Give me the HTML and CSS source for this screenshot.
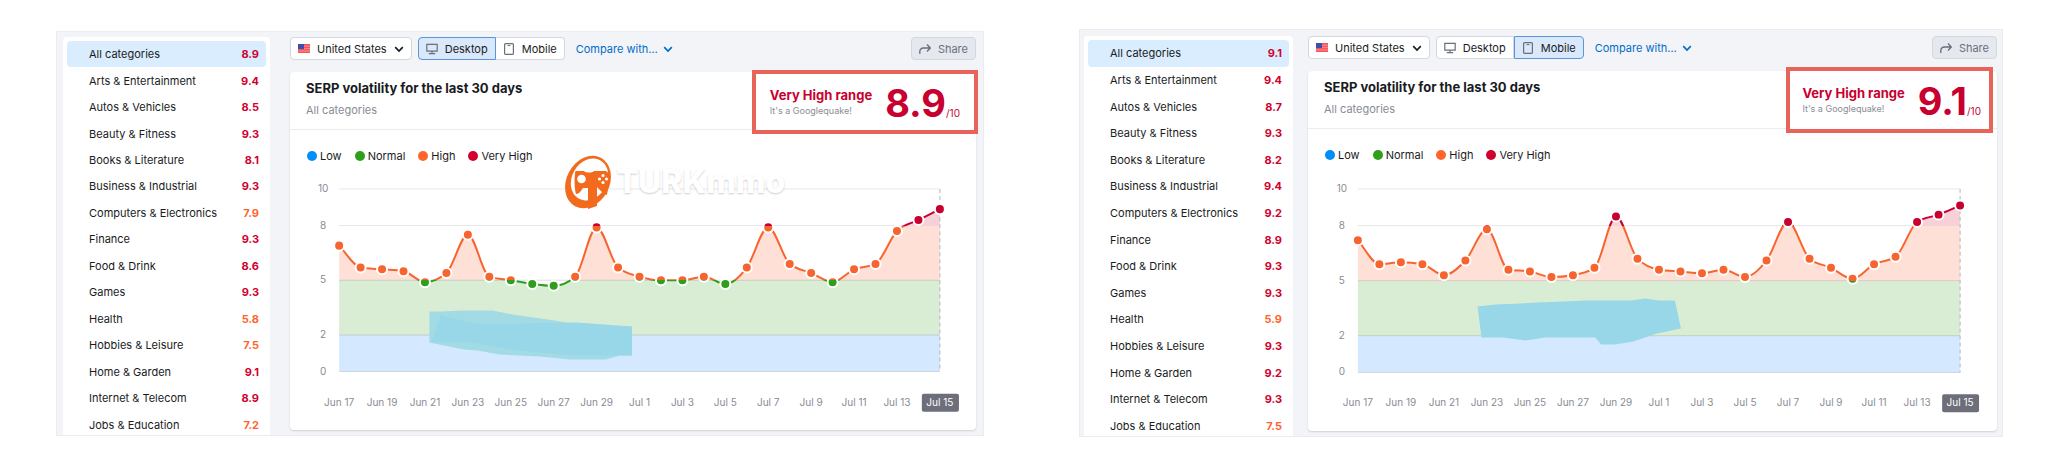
FILE: index.html
```
<!DOCTYPE html>
<html lang="en">
<head>
    <meta charset="UTF-8">
    <meta name="viewport" content="width=device-width, initial-scale=1.0">
    <title>SERP volatility: desktop and mobile</title>
    <link rel="stylesheet" href="styles.css">
</head>
<body>
    <svg class="sprite" aria-hidden="true">
        <symbol id="flag-us" viewBox="0 0 12 9">
            <rect width="12" height="9" fill="#f4555a"/>
            <path d="M6 2.2h6M6 4.6h6M0 7h12" stroke="#f9a9a6" stroke-width="0.7"/>
            <rect width="6" height="5" fill="#3f4fa8"/>
        </symbol>
        <symbol id="chevron" viewBox="0 0 10 10">
            <path d="M1.2 3.2 5 7l3.8-3.8" fill="none" stroke="currentColor" stroke-width="1.7"/>
        </symbol>
        <symbol id="desktop" viewBox="0 0 12 12">
            <path d="M.8 1.3h10.400v6.900H.8zM6 8.200v2.500M2.800 10.700h6.400" fill="none" stroke="currentColor" stroke-width="1.2"/>
        </symbol>
        <symbol id="mobile" viewBox="0 0 12 12">
            <rect x="1.6" y=".6" width="8.8" height="10.8" rx="1" fill="none" stroke="currentColor" stroke-width="1.2"/>
            <path d="M4.5 2.6h3" stroke="currentColor" stroke-width="1"/>
        </symbol>
        <symbol id="share" viewBox="0 0 12 12">
            <path d="M.8 11V8.500a3.500 3.500 0 0 1 3.500-3.500h6.500M8 1.500 11.300 5 8 8.500" fill="none" stroke="currentColor" stroke-width="1.3"/>
        </symbol>
    </svg>

    <div class="page">
        <section class="panel panel-desktop">
            <nav class="categories">
                <a href="#" class="active">All categories <b>8.9</b></a>
                <a href="#">Arts &amp; Entertainment <b>9.4</b></a>
                <a href="#">Autos &amp; Vehicles <b>8.5</b></a>
                <a href="#">Beauty &amp; Fitness <b>9.3</b></a>
                <a href="#">Books &amp; Literature <b>8.1</b></a>
                <a href="#">Business &amp; Industrial <b>9.3</b></a>
                <a href="#">Computers &amp; Electronics <b class="high">7.9</b></a>
                <a href="#">Finance <b>9.3</b></a>
                <a href="#">Food &amp; Drink <b>8.6</b></a>
                <a href="#">Games <b>9.3</b></a>
                <a href="#">Health <b class="high">5.8</b></a>
                <a href="#">Hobbies &amp; Leisure <b class="high">7.5</b></a>
                <a href="#">Home &amp; Garden <b>9.1</b></a>
                <a href="#">Internet &amp; Telecom <b>8.9</b></a>
                <a href="#">Jobs &amp; Education <b class="high">7.2</b></a>
            </nav>
            <div class="main">
                <div class="toolbar">
                    <button type="button" class="btn country"><svg class="flag"><use href="#flag-us"/></svg>United States<svg class="chev"><use href="#chevron"/></svg></button>
                    <div class="devices">
                        <button type="button" class="btn selected"><svg class="icon"><use href="#desktop"/></svg>Desktop</button>
                        <button type="button" class="btn"><svg class="icon"><use href="#mobile"/></svg>Mobile</button>
                    </div>
                    <button type="button" class="compare">Compare with… <svg class="chev"><use href="#chevron"/></svg></button>
                    <button type="button" class="btn share"><svg class="icon"><use href="#share"/></svg>Share</button>
                </div>
                <div class="card">
                    <div class="card-header">
                        <h2>SERP volatility for the last 30 days</h2>
                        <p>All categories</p>
                    </div>
                    <div class="score">
                        <div class="score-text">
                            <strong>Very High range</strong>
                            <span>It's a Googlequake!</span>
                        </div>
                        <div class="score-value">8.9<small>/10</small></div>
                    </div>
                    <ul class="legend">
                        <li class="low">Low</li>
                        <li class="normal">Normal</li>
                        <li class="high">High</li>
                        <li class="very-high">Very High</li>
                    </ul>
                    <svg class="chart" id="chart-desktop" viewBox="0 0 684 257"></svg>
                    <div class="watermark">
                        <svg viewBox="0 0 48 54">
                            <ellipse cx="24" cy="27" rx="21.5" ry="27.5" fill="#f26a1b" transform="rotate(28 24 27)"/>
                            <ellipse cx="25.5" cy="24.5" rx="17.5" ry="22" fill="#fff" transform="rotate(30 25.5 24.5)"/>
                            <path d="M11.500 16H20c2 2 8 2 10 0h12l4 3-3 21c-4-1-7-5-10-8v19l-9 3V33h-5c-2 3-4 6-7 6-1.500-5-2-17-.500-23z" fill="#f26a1b"/>
                            <circle cx="17.500" cy="24" r="4.300" fill="#fff"/>
                            <g fill="#fff"><circle cx="39" cy="20.500" r="1.600"/><circle cx="39" cy="27.500" r="1.600"/><circle cx="35.500" cy="24" r="1.600"/><circle cx="42.500" cy="24" r="1.600"/></g>
                        </svg>
                        <span>TURKmmo</span>
                    </div>
                </div>
            </div>
        </section>

        <section class="panel panel-mobile">
            <nav class="categories">
                <a href="#" class="active">All categories <b>9.1</b></a>
                <a href="#">Arts &amp; Entertainment <b>9.4</b></a>
                <a href="#">Autos &amp; Vehicles <b>8.7</b></a>
                <a href="#">Beauty &amp; Fitness <b>9.3</b></a>
                <a href="#">Books &amp; Literature <b>8.2</b></a>
                <a href="#">Business &amp; Industrial <b>9.4</b></a>
                <a href="#">Computers &amp; Electronics <b>9.2</b></a>
                <a href="#">Finance <b>8.9</b></a>
                <a href="#">Food &amp; Drink <b>9.3</b></a>
                <a href="#">Games <b>9.3</b></a>
                <a href="#">Health <b class="high">5.9</b></a>
                <a href="#">Hobbies &amp; Leisure <b>9.3</b></a>
                <a href="#">Home &amp; Garden <b>9.2</b></a>
                <a href="#">Internet &amp; Telecom <b>9.3</b></a>
                <a href="#">Jobs &amp; Education <b class="high">7.5</b></a>
            </nav>
            <div class="main">
                <div class="toolbar">
                    <button type="button" class="btn country"><svg class="flag"><use href="#flag-us"/></svg>United States<svg class="chev"><use href="#chevron"/></svg></button>
                    <div class="devices">
                        <button type="button" class="btn"><svg class="icon"><use href="#desktop"/></svg>Desktop</button>
                        <button type="button" class="btn selected"><svg class="icon"><use href="#mobile"/></svg>Mobile</button>
                    </div>
                    <button type="button" class="compare">Compare with… <svg class="chev"><use href="#chevron"/></svg></button>
                    <button type="button" class="btn share"><svg class="icon"><use href="#share"/></svg>Share</button>
                </div>
                <div class="card">
                    <div class="card-header">
                        <h2>SERP volatility for the last 30 days</h2>
                        <p>All categories</p>
                    </div>
                    <div class="score">
                        <div class="score-text">
                            <strong>Very High range</strong>
                            <span>It's a Googlequake!</span>
                        </div>
                        <div class="score-value">9.1<small>/10</small></div>
                    </div>
                    <ul class="legend">
                        <li class="low">Low</li>
                        <li class="normal">Normal</li>
                        <li class="high">High</li>
                        <li class="very-high">Very High</li>
                    </ul>
                    <svg class="chart" id="chart-mobile" viewBox="0 0 691 261"></svg>
                </div>
            </div>
        </section>
    </div>

    <script src="chart.js"></script>
</body>
</html>
```

FILE: styles.css
```
* {
    box-sizing: border-box;
}

body {
    font-family: Inter, "Liberation Sans", sans-serif;
    font-size: 11px;
    line-height: 14px;
    margin: 0;
    background-color: #fff;
    color: #191b23;
}

button {
    font: inherit;
    color: inherit;
    cursor: pointer;
}

.sprite {
    display: none;
}

.page {
    display: flex;
    align-items: flex-start;
    gap: 95px;
    padding: 29px 53px 20px 56px;
}

.panel {
    flex: 1;
    min-width: 0;
    display: flex;
    overflow: hidden;
    background-color: #f3f4f8;
    border: 1px solid #ebecef;
}

.panel-desktop {
    gap: 20px;
    margin-top: 2px;
    padding: 5px 7px 0 6px;
}

.panel-mobile {
    gap: 15px;
    padding: 6px 5px 0 4px;
}

/* Categories */
.categories {
    flex: 0 0 207px;
    display: flex;
    flex-direction: column;
    margin-bottom: -3px;
    padding: 4px 4px 0;
    background-color: #fff;
    border-radius: 4px 4px 0 0;
}

.panel-mobile .categories {
    flex-basis: 209px;
}

.categories a {
    flex: 1;
    display: flex;
    align-items: center;
    justify-content: space-between;
    padding: 0 7px 0 22px;
    border-radius: 4px;
    color: #191b23;
    text-decoration: none;
}

.categories a.active {
    background-color: #d9edff;
}

.categories b {
    color: #d1002f;
}

.categories b.high {
    color: #ff642d;
}

/* Toolbar */
.main {
    flex: 1;
    min-width: 0;
    padding-bottom: 5px;
}

.toolbar {
    display: flex;
    align-items: center;
    margin-bottom: 12px;
}

.btn {
    display: flex;
    align-items: center;
    gap: 7px;
    height: 23px;
    padding: 0 7px;
    background-color: #fff;
    border: 1px solid #d5d7de;
    border-radius: 4px;
}

.flag {
    width: 12px;
    height: 9px;
}

.chev {
    width: 10px;
    height: 10px;
}

.icon {
    width: 12px;
    height: 12px;
    color: #6c6e79;
}

.devices {
    display: flex;
    margin-left: 6px;
}

.devices .btn:first-child {
    border-radius: 4px 0 0 4px;
}

.devices .btn:last-child {
    border-left: 0;
    border-radius: 0 4px 4px 0;
}

.devices .btn.selected {
    background-color: #d9e8fb;
    border: 1px solid #5c96d8;
}

.compare {
    display: flex;
    align-items: center;
    gap: 5px;
    margin-left: 11px;
    padding: 0;
    background: none;
    border: 0;
    color: #006dca;
}

.share {
    margin-left: auto;
    background-color: #e6e8ef;
    color: #6c6e79;
}

/* Card */
.card {
    position: relative;
    background-color: #fff;
    border-radius: 4px;
    box-shadow: 0 1px 2px rgba(25, 27, 35, 0.16);
}

.card-header {
    padding: 8px 16px 11px;
    border-bottom: 1px solid #ebecf0;
}

.card-header h2 {
    margin: 0 0 6px;
    font-size: 13px;
    line-height: 16px;
}

.card-header p {
    margin: 0;
    line-height: 16px;
    color: #8a8c94;
}

/* Highlighted score, drawn over the card's corner */
.score {
    position: absolute;
    top: -2px;
    right: -2px;
    display: flex;
    align-items: center;
    gap: 13px;
    height: 64px;
    padding: 2px 14px 0;
    background-color: #fff;
    border: 4px solid #e8645a;
    color: #c8002f;
}

.panel-mobile .score {
    top: -4px;
    right: 4px;
    height: 66px;
    padding: 2px 8px 0 12px;
}

.score-text strong {
    display: block;
    font-size: 13px;
    line-height: 16px;
}

.score-text span {
    display: block;
    font-size: 9px;
    line-height: 16px;
    color: #8a8c94;
}

.score-value {
    font-size: 38px;
    font-weight: 700;
    line-height: 40px;
}

.score-value small {
    font-size: 10px;
    font-weight: 400;
    line-height: 10px;
}

.legend {
    display: flex;
    gap: 13px;
    margin: 0;
    padding: 19px 17px 9px;
    list-style: none;
}

.legend li {
    display: flex;
    align-items: center;
    gap: 3px;
}

.legend li::before {
    content: "";
    width: 10px;
    height: 10px;
    border-radius: 50%;
    background-color: var(--dot);
}

.legend .low { --dot: #008ff8; }
.legend .normal { --dot: #2f9e1b; }
.legend .high { --dot: #ff642d; }
.legend .very-high { --dot: #d1002f; }

.chart {
    display: block;
    width: 100%;
    height: auto;
}

.chart text {
    font-size: 10px;
    fill: #8a8c94;
    text-anchor: middle;
}

.chart text.current {
    fill: #fff;
}

.watermark {
    position: absolute;
    top: 83px;
    left: 40%;
    display: flex;
    align-items: center;
    gap: 4px;
}

.watermark svg {
    width: 48px;
    height: 54px;
    overflow: visible;
}

.watermark span {
    font-size: 32px;
    font-weight: 800;
    line-height: 36px;
    color: #fff;
    text-shadow: 0 1px 2px rgba(0, 0, 0, 0.2);
}
```

FILE: chart.js
```
const LABELS = ['Jun 17', 'Jun 19', 'Jun 21', 'Jun 23', 'Jun 25', 'Jun 27', 'Jun 29',
    'Jul 1', 'Jul 3', 'Jul 5', 'Jul 7', 'Jul 9', 'Jul 11', 'Jul 13', 'Jul 15'];

// Ranges from the top of the scale down
const RANGES = [
    { from: 10, to: 8, line: '#c8002f', area: '#f8d0d8' },
    { from: 8, to: 5, line: '#f8642f', area: '#ffe0d7' },
    { from: 5, to: 2, line: '#2f9e1b', area: '#d9edd4' },
    { from: 2, to: 0, line: '#008ff8', area: '#d4e8ff' }
];

function gradient(id, key, top, bottom) {
    const stops = RANGES.map(r => `
        <stop offset="${(10 - r.from) / 10}" stop-color="${r[key]}"/>
        <stop offset="${(10 - r.to) / 10}" stop-color="${r[key]}"/>`).join('');
    return `<linearGradient id="${id}" gradientUnits="userSpaceOnUse" x1="0" x2="0" y1="${top}" y2="${bottom}">${stops}</linearGradient>`;
}

// Smooth line that never overshoots its points
function curve(points) {
    const slopes = points.slice(1).map((p, i) => (p[1] - points[i][1]) / (p[0] - points[i][0]));
    const tangents = points.map((p, i) => {
        const a = slopes[i - 1];
        const b = slopes[i];
        if (a === undefined) return b;
        if (b === undefined) return a;
        if (a * b <= 0) return 0;
        return Math.sign(a) * Math.min(Math.abs(a), Math.abs(b), Math.abs(a + b) / 4) * 2;
    });
    let d = `M${points[0]}`;
    for (let i = 1; i < points.length; i++) {
        const [x0, y0] = points[i - 1];
        const [x1, y1] = points[i];
        const dx = (x1 - x0) / 3;
        d += `C${x0 + dx},${y0 + dx * tangents[i - 1]} ${x1 - dx},${y1 - dx * tangents[i]} ${x1},${y1}`;
    }
    return d;
}

function drawChart(id, values, plot, brush) {
    const x = i => plot.left + (plot.right - plot.left) * i / (values.length - 1);
    const y = v => plot.bottom - (plot.bottom - plot.top) * v / 10;
    const points = values.map((v, i) => [x(i), y(v)]);
    const line = curve(points);

    let svg = `<defs>${gradient(id + '-line', 'line', plot.top, plot.bottom)}${gradient(id + '-area', 'area', plot.top, plot.bottom)}</defs>`;
    svg += [10, 8].map(v => `<path d="M${plot.left} ${y(v)}H${plot.right}" stroke="#e6e7ec"/>`).join('');
    svg += `<path d="${line}V${plot.bottom}H${plot.left}Z" fill="url(#${id}-area)"/>`;
    svg += [5, 2, 0].map(v => `<path d="M${plot.left} ${y(v)}H${plot.right}" stroke="#6c6e79" stroke-opacity="0.22"/>`).join('');
    svg += [10, 8, 5, 2, 0].map(v => `<text x="${plot.left - 16}" y="${y(v) + 3}">${v}</text>`).join('');
    svg += `<path d="M${plot.right} ${plot.top}V${plot.bottom}" stroke="#b3b5bf" stroke-dasharray="4 3"/>`;
    svg += brush;
    svg += `<path d="${line}" fill="none" stroke="url(#${id}-line)" stroke-width="2"/>`;
    svg += points.map(p => `<circle cx="${p[0]}" cy="${p[1]}" r="5" fill="url(#${id}-line)" stroke="#fff" stroke-width="2"/>`).join('');

    const labelY = plot.bottom + 34;
    svg += `<rect x="${plot.right - 18}" y="${labelY - 12}" width="37" height="18" rx="2" fill="#6c6e79"/>`;
    svg += LABELS.map((label, i) => {
        const current = i === LABELS.length - 1 ? ' class="current"' : '';
        return `<text x="${x(i * 2)}" y="${labelY}"${current}>${label}</text>`;
    }).join('');

    document.getElementById(id).innerHTML = svg;
}

drawChart('chart-desktop',
    [6.9, 5.7, 5.6, 5.5, 4.9, 5.4, 7.5, 5.2, 5.0, 4.8, 4.7, 5.2, 7.9, 5.7, 5.2, 5.0, 5.0, 5.2, 4.8, 5.7, 7.9, 5.9, 5.4, 4.9, 5.6, 5.9, 7.7, 8.3, 8.9],
    { left: 49, right: 648, top: 17, bottom: 199 },
    `<path d="M139 139h12l21-1h30l20 4 42 6 34 6h43v29h-12l-14 4h-36l-30-3-40-2-22-4-14-1-34-7z" fill="#a3dbe4"/>
    <path d="M150 143l36 8 40 0 60-1 55 4v29h-60l-55-5-46-8h-39z" fill="#98d7e8"/>`);

drawChart('chart-mobile',
    [7.2, 5.9, 6.0, 5.9, 5.3, 6.1, 7.8, 5.6, 5.5, 5.2, 5.3, 5.7, 8.5, 6.2, 5.6, 5.5, 5.4, 5.6, 5.2, 6.1, 8.2, 6.2, 5.7, 5.1, 5.9, 6.3, 8.2, 8.6, 9.1],
    { left: 50, right: 654, top: 18, bottom: 202 },
    '<path d="M170 136l18-2 42-2 50-2h44l14-2 14 2h16l6 28-24 5-24 8-18 3h-14l-6-7h-50l-20 3-22-3h-22z" fill="#98d7e8"/>');
```
